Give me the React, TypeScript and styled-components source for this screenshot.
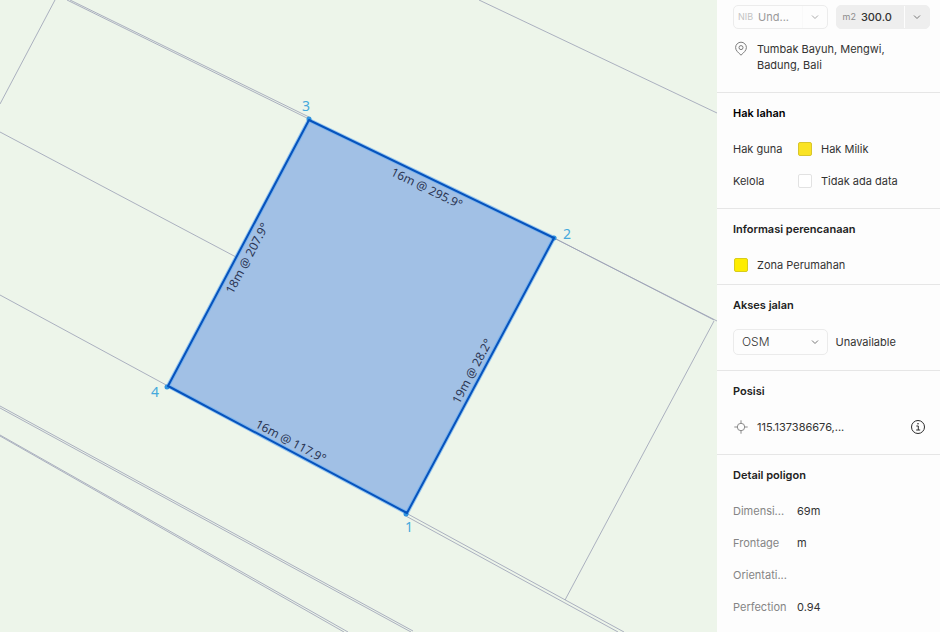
import React from "react";
import styled, { createGlobalStyle } from "styled-components";

const GlobalStyle = createGlobalStyle`
  *, *::before, *::after { box-sizing: border-box; }
  body { margin: 0; background: #fdfdfd; }
  button, input, select { font: inherit; color: inherit; }
`;

const Page = styled.div`
  display: grid;
  grid-template-columns: minmax(0, 1fr) 223px;
  min-height: 100vh;
  font-family: Inter, "Liberation Sans", sans-serif;
  font-size: 11px;
  line-height: 16px;
  color: #333;
`;

const MapArea = styled.main`
  background: #edf5ea;
  min-width: 0;
`;

const MapCanvas = styled.svg`
  display: block;
  width: 100%;
  height: 100vh;
`;

const ParcelLines = styled.g`
  fill: none;
  stroke: #9a9fb4;
  stroke-width: 1;
`;

const MeasureText = styled.text`
  font-family: "Noto Sans", "Open Sans", sans-serif;
  font-size: 12px;
  fill: #2b3654;
  text-anchor: middle;
  dominant-baseline: central;
`;

const CornerText = styled.text`
  font-family: "Noto Sans", "Open Sans", sans-serif;
  font-size: 14px;
  fill: #45a9dc;
  text-anchor: middle;
  dominant-baseline: central;
`;

const Panel = styled.aside`
  background: #fdfdfd;
  padding-top: 5px;
  min-width: 0;
`;

const Section = styled.section<{ $bottom?: number; $last?: boolean }>`
  padding: 0 10px ${(p) => p.$bottom ?? 11}px 16px;
  border-bottom: ${(p) => (p.$last ? "0" : "1px solid #e6e6e6")};
`;

const Heading = styled.h2<{ $strong?: boolean }>`
  margin: 0;
  font-size: 11px;
  font-weight: 600;
  line-height: 40px;
  color: ${(p) => (p.$strong ? "#000" : "#222")};
`;

const ChipRow = styled.div`
  display: grid;
  grid-template-columns: 1fr 1fr;
  gap: 8px;
`;

const Chip = styled.div<{ $filled?: boolean }>`
  display: flex;
  align-items: center;
  height: 24px;
  min-width: 0;
  border-radius: 5px;
  border: 1px solid ${(p) => (p.$filled ? "#eeeeee" : "#ececec")};
  background: ${(p) => (p.$filled ? "#eeeeee" : "#fdfdfd")};
  color: ${(p) => (p.$filled ? "#333" : "#9a9a9a")};
`;

const ChipLabel = styled.label<{ $faint?: boolean }>`
  padding: 0 5px 0 ${(p) => (p.$faint ? 4 : 6)}px;
  font-size: 9px;
  color: ${(p) => (p.$faint ? "#c4c4c4" : "#8c8c8c")};
`;

const ChipInput = styled.input<{ $strong?: boolean }>`
  flex: 1;
  width: 0;
  min-width: 0;
  padding: 0;
  border: 0;
  outline: 0;
  background: transparent;
  font-size: 11px;
  font-weight: ${(p) => (p.$strong ? 500 : 400)};
`;

const ChipToggle = styled.button<{ $line: string }>`
  display: flex;
  align-items: center;
  justify-content: center;
  width: 25px;
  height: 22px;
  padding: 0;
  border: 0;
  border-left: 1px solid ${(p) => p.$line};
  background: transparent;
`;

const Address = styled.div`
  display: flex;
  align-items: flex-start;
  gap: 8px;
  padding-top: 12px;
`;

const Row = styled.div`
  display: flex;
  align-items: center;
  gap: 8px;
  min-height: 32px;
`;

const RowLabel = styled.span<{ $muted?: boolean }>`
  width: 56px;
  color: ${(p) => (p.$muted ? "#858585" : "#333")};
  white-space: nowrap;
`;

const IconSlot = styled.span`
  display: flex;
  align-items: center;
  justify-content: center;
  width: 16px;
  height: 16px;
  flex: none;
`;

const Swatch = styled.span<{ $fill: string; $edge: string }>`
  width: 14px;
  height: 14px;
  border-radius: 2px;
  background: ${(p) => p.$fill};
  border: 1px solid ${(p) => p.$edge};
`;

const RoadRow = styled.div`
  display: grid;
  grid-template-columns: 1fr 1fr;
  align-items: center;
  gap: 8px;
  min-height: 34px;
`;

const SelectBox = styled.div`
  display: grid;
  align-items: center;
  height: 26px;
  border: 1px solid #ebebeb;
  border-radius: 5px;
  & > * { grid-area: 1 / 1; }
  & > svg { justify-self: end; margin-right: 7px; pointer-events: none; }
`;

const Select = styled.select`
  appearance: none;
  width: 100%;
  height: 24px;
  padding: 0 24px 0 8px;
  border: 0;
  outline: 0;
  background: transparent;
  font-size: 12px;
  font-weight: 300;
`;

const InfoButton = styled.button`
  display: flex;
  margin-left: auto;
  margin-right: 4px;
  padding: 0;
  border: 0;
  background: transparent;
`;

const Chevron = ({ color }: { color: string }) => (
  <svg width="10" height="10" viewBox="0 0 10 10" fill="none" stroke={color}>
    <path d="M2 3.5 L5 6.5 L8 3.5" />
  </svg>
);

const PinIcon = () => (
  <svg width="16" height="16" viewBox="0 0 16 16" fill="none" stroke="#7c7c7c">
    <path d="M8 14.2 C5.6 11.8 2.6 9.6 2.6 6.6 A5.4 5.4 0 0 1 13.4 6.6 C13.4 9.6 10.4 11.8 8 14.2 Z" />
    <circle cx="8" cy="6.6" r="2" />
  </svg>
);

const TargetIcon = () => (
  <svg width="16" height="16" viewBox="0 0 16 16" fill="none" stroke="#8a8a8a">
    <circle cx="8" cy="8" r="3.7" />
    <path d="M8 1.3V4.3M8 11.7V14.7M1.3 8H4.3M11.7 8H14.7" />
  </svg>
);

const InfoIcon = () => (
  <svg width="16" height="16" viewBox="0 0 16 16" fill="none" stroke="#2a2a2a">
    <circle cx="8" cy="8" r="6.5" />
    <path d="M6.3 7H8.3V11M6.2 11H10.2" />
    <circle cx="8" cy="4.8" r="0.8" fill="#2a2a2a" stroke="none" />
  </svg>
);

const neighbours = [
  "M55 0L0 104",
  "M67 0L309 119",
  "M70 0L309 117",
  "M0 132L236 257",
  "M0 295L168 386",
  "M0 406L413 631",
  "M0 408L411 632",
  "M0 435L348 632",
  "M0 436L344 632",
  "M406 513L624 632",
  "M404 515L618 632",
  "M554 238L717 321",
  "M554 238L714 320",
  "M714 321L565 600",
  "M479 0L717 113",
];

const corners = [
  { n: 1, x: 409, y: 526, px: 406, py: 514 },
  { n: 2, x: 567, y: 233, px: 554, py: 238 },
  { n: 3, x: 306, y: 105, px: 309, py: 119 },
  { n: 4, x: 155, y: 391, px: 167, py: 387 },
];

const measures = [
  { text: "16m @ 295.9°", x: 427, y: 188, angle: 26 },
  { text: "18m @ 207.9°", x: 247, y: 258, angle: -62 },
  { text: "16m @ 117.9°", x: 291, y: 441, angle: 28 },
  { text: "19m @ 28.2°", x: 472, y: 371, angle: -62 },
];

const details = [
  ["Dimensi...", "69m"],
  ["Frontage", "m"],
  ["Orientati...", ""],
  ["Perfection", "0.94"],
];

const outline = "M309 120L554 238L407 513L168 386Z";

export default function App() {
  return (
    <>
      <GlobalStyle />
      <Page>
        <MapArea>
          <MapCanvas viewBox="0 0 717 632" preserveAspectRatio="xMidYMid slice" role="img" aria-label="Peta bidang">
            <ParcelLines>
              {neighbours.map((d) => (
                <path key={d} d={d} strokeOpacity={0.8} />
              ))}
            </ParcelLines>
            <path d={outline} fill="#a1c0e5" stroke="#5fa9f2" strokeWidth="4" strokeOpacity="0.6" />
            {corners.map((c) => (
              <circle key={c.n} cx={c.px} cy={c.py} r="2.5" fill="#2f93e0" />
            ))}
            <path d={outline} fill="none" stroke="#0653bd" strokeWidth="2" strokeLinejoin="round" />
            {measures.map((m) => (
              <MeasureText key={m.text} x={m.x} y={m.y} transform={`rotate(${m.angle} ${m.x} ${m.y})`}>
                {m.text}
              </MeasureText>
            ))}
            {corners.map((c) => (
              <CornerText key={c.n} x={c.x} y={c.y}>
                {c.n}
              </CornerText>
            ))}
          </MapCanvas>
        </MapArea>

        <Panel>
          <Section $bottom={19}>
            <ChipRow>
              <Chip>
                <ChipLabel htmlFor="nib" $faint>NIB</ChipLabel>
                <ChipInput id="nib" defaultValue="Und..." />
                <ChipToggle $line="#f9f9f9" aria-label="Pilih NIB">
                  <Chevron color="#aaaaaa" />
                </ChipToggle>
              </Chip>
              <Chip $filled>
                <ChipLabel htmlFor="area">m2</ChipLabel>
                <ChipInput id="area" defaultValue="300.0" $strong />
                <ChipToggle $line="#fdfdfd" aria-label="Pilih luas">
                  <Chevron color="#777777" />
                </ChipToggle>
              </Chip>
            </ChipRow>
            <Address>
              <IconSlot><PinIcon /></IconSlot>
              <span>Tumbak Bayuh, Mengwi,<br />Badung, Bali</span>
            </Address>
          </Section>

          <Section>
            <Heading $strong>Hak lahan</Heading>
            <Row>
              <RowLabel>Hak guna</RowLabel>
              <IconSlot><Swatch $fill="#fae324" $edge="#d9c62c" /></IconSlot>
              <span>Hak Milik</span>
            </Row>
            <Row>
              <RowLabel>Kelola</RowLabel>
              <IconSlot><Swatch $fill="#ffffff" $edge="#e2e2e2" /></IconSlot>
              <span>Tidak ada data</span>
            </Row>
          </Section>

          <Section $bottom={3}>
            <Heading>Informasi perencanaan</Heading>
            <Row>
              <IconSlot><Swatch $fill="#feed00" $edge="#d8cc1c" /></IconSlot>
              <span>Zona Perumahan</span>
            </Row>
          </Section>

          <Section>
            <Heading>Akses jalan</Heading>
            <RoadRow>
              <SelectBox>
                <Select aria-label="Sumber jalan" defaultValue="OSM">
                  <option>OSM</option>
                </Select>
                <Chevron color="#777777" />
              </SelectBox>
              <span>Unavailable</span>
            </RoadRow>
          </Section>

          <Section>
            <Heading>Posisi</Heading>
            <Row>
              <IconSlot><TargetIcon /></IconSlot>
              <span>115.137386676,...</span>
              <InfoButton aria-label="Info posisi"><InfoIcon /></InfoButton>
            </Row>
          </Section>

          <Section $last $bottom={8}>
            <Heading>Detail poligon</Heading>
            {details.map(([label, value]) => (
              <Row key={label}>
                <RowLabel $muted>{label}</RowLabel>
                <span>{value}</span>
              </Row>
            ))}
          </Section>
        </Panel>
      </Page>
    </>
  );
}
